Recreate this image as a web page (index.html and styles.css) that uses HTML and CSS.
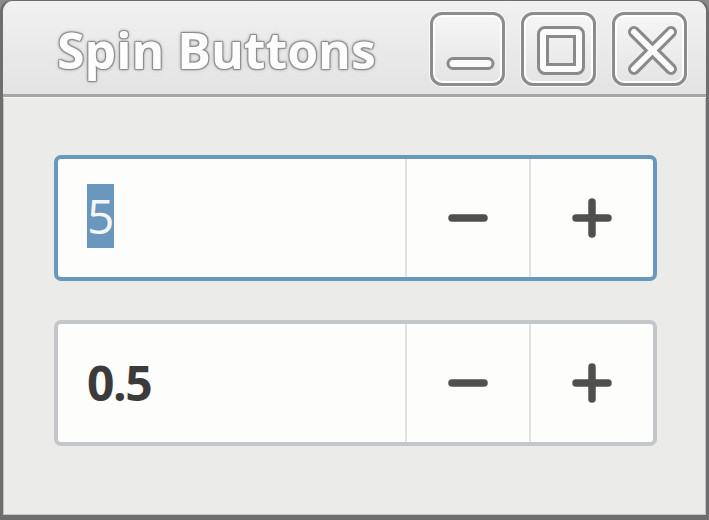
FILE: index.html
```html
<!DOCTYPE html>
<html>
<head>
<meta charset="utf-8">
<link rel="stylesheet" href="styles.css">
</head>
<body>
<div class="window">
  <div class="titlebar">
    <div class="title">Spin Buttons</div>
    <div class="controls">
      <div class="wbtn">
        <svg width="68" height="68" viewBox="0 0 68 68">
          <line x1="19" y1="48.5" x2="54" y2="48.5" stroke="#8a8a8a" stroke-width="13" stroke-linecap="round"/>
          <line x1="19" y1="48.5" x2="54" y2="48.5" stroke="#fbfbfb" stroke-width="7" stroke-linecap="round"/>
        </svg>
      </div>
      <div class="wbtn">
        <svg width="68" height="68" viewBox="0 0 68 68">
          <rect x="18" y="17" width="36" height="37" rx="2" fill="none" stroke="#8a8a8a" stroke-width="12"/>
          <rect x="18" y="17" width="36" height="37" rx="2" fill="none" stroke="#fbfbfb" stroke-width="6"/>
        </svg>
      </div>
      <div class="wbtn">
        <svg width="68" height="68" viewBox="0 0 68 68">
          <path d="M18 17 L55 54 M55 17 L18 54" stroke="#8a8a8a" stroke-width="12" stroke-linecap="round"/>
          <path d="M18 17 L55 54 M55 17 L18 54" stroke="#fbfbfb" stroke-width="6" stroke-linecap="round"/>
        </svg>
      </div>
    </div>
  </div>
  <div class="content">
    <div class="spin focused">
      <div class="entry"><span class="sel">5</span></div>
      <div class="sbtn">
        <svg width="40" height="40" viewBox="0 0 40 40"><line x1="4" y1="20" x2="36" y2="20" stroke="#505050" stroke-width="7.5" stroke-linecap="round"/></svg>
      </div>
      <div class="sbtn">
        <svg width="40" height="40" viewBox="0 0 40 40"><path d="M4 20 L36 20 M20 4 L20 36" stroke="#505050" stroke-width="7.5" stroke-linecap="round"/></svg>
      </div>
    </div>
    <div class="spin">
      <div class="entry"><span class="val">0.5</span></div>
      <div class="sbtn">
        <svg width="40" height="40" viewBox="0 0 40 40"><line x1="4" y1="20" x2="36" y2="20" stroke="#505050" stroke-width="7.5" stroke-linecap="round"/></svg>
      </div>
      <div class="sbtn">
        <svg width="40" height="40" viewBox="0 0 40 40"><path d="M4 20 L36 20 M20 4 L20 36" stroke="#505050" stroke-width="7.5" stroke-linecap="round"/></svg>
      </div>
    </div>
  </div>
</div>
</body>
</html>
```
FILE: styles.css
```css
* { box-sizing: border-box; }
html, body {
  margin: 0;
  padding: 0;
  width: 709px;
  height: 520px;
  background: #8a8a8a;
  overflow: hidden;
}
.window {
  width: 709px;
  height: 520px;
  display: flex;
  flex-direction: column;
  background: #ebebea;
  border: 3px solid #6e6e6e;
  border-top-width: 1px;
  border-bottom-width: 5px;
  border-radius: 12px 12px 0 0;
  box-shadow: inset 0 0 0 1px #c4c4c4;
  font-family: "Open Sans", "DejaVu Sans", sans-serif;
}
.titlebar {
  height: 96px;
  flex: none;
  display: flex;
  align-items: center;
  justify-content: space-between;
  padding: 0 19px 0 54px;
  background: linear-gradient(#f1f1f1, #e3e3e3);
  border-bottom: 3px solid #a6a6a6;
  border-radius: 11px 11px 0 0;
}
.title {
  font-size: 50px;
  font-weight: 700;
  color: #fdfdfd;
  letter-spacing: 0;
  margin-top: 4px;
  text-shadow: 1px 1px 1px #8d8d8d, -1px -1px 1px #8d8d8d, 1px -1px 1px #8d8d8d, -1px 1px 1px #8d8d8d, 0 0 4px #a0a0a0;
}
.controls {
  display: flex;
  gap: 16px;
  margin-top: 2px;
}
.wbtn {
  width: 75px;
  height: 74px;
  border: 3px solid #8c8c8c;
  border-radius: 12px;
  background: linear-gradient(#f6f6f6, #e4e4e4);
  box-shadow: inset 0 0 0 2px #ffffff, 0 0 0 1px #fafafa;
  display: flex;
  align-items: center;
  justify-content: center;
}
.content {
  flex: 1;
  display: flex;
  flex-direction: column;
  gap: 39px;
  padding: 57px 49px 0 51px;
  border-top: 1px solid #f6f6f6;
}
.spin {
  height: 126px;
  display: flex;
  background: #fdfdfb;
  border: 4px solid #c3c7c9;
  border-radius: 7px;
}
.spin.focused {
  border-color: #6a97be;
}
.entry {
  flex: 1;
  display: flex;
  align-items: center;
  padding-left: 29px;
  font-size: 48px;
  font-weight: 700;
  color: #3b3b3b;
}
.sel {
  background: #6a97be;
  color: #f4f6f8;
  line-height: 64px;
  font-weight: 400;
  margin-top: -4px;
}
.val {
  line-height: 64px;
  letter-spacing: -1.5px;
}
.sbtn {
  width: 124px;
  flex: none;
  display: flex;
  align-items: center;
  justify-content: center;
  border-left: 2px solid #e2e2e0;
}
.sbtn:first-of-type {
  padding-right: 4px;
}
```
